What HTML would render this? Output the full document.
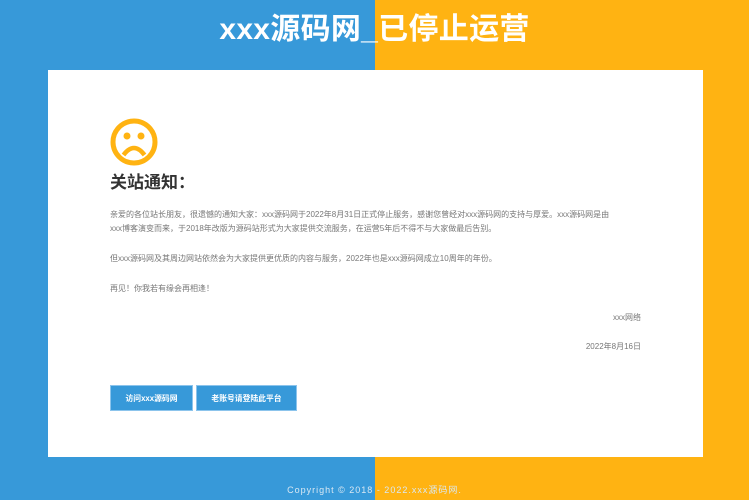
<!DOCTYPE html>
<html><head><meta charset="utf-8"><style>
*{margin:0;padding:0;box-sizing:border-box}
body{width:749px;height:500px;overflow:hidden;position:relative;font-family:"Liberation Sans","Noto Sans CJK SC",sans-serif;background:linear-gradient(90deg,#3799d9 0,#3799d9 375px,#ffb312 375px)}
h1{position:absolute;top:11px;left:0;width:749px;text-align:center;color:#fff;font-size:30px;font-weight:bold;line-height:38px;letter-spacing:0.3px}
.card{position:absolute;left:48px;top:70px;width:655px;height:387px;background:#fff}
.face{position:absolute;left:62px;top:48px}
h2{position:absolute;left:62px;top:101px;font-size:17px;font-weight:bold;color:#333;line-height:24px}
.p{position:absolute;left:62px;font-size:8px;color:#777;line-height:14px;white-space:nowrap}
.r{position:absolute;right:62px;font-size:8px;color:#777;line-height:14px}
.btn{position:absolute;top:315px;height:26px;background:#3799d9;color:#fff;font-size:7.8px;font-weight:bold;text-align:center;line-height:26px;border:1px solid #8cc4ec}
.foot{position:absolute;top:483px;width:749px;text-align:center;color:#d9e8f3;font-size:9px;letter-spacing:1px}
</style></head><body>
<h1>xxx源码网_已停止运营</h1>
<div class="card">
<svg class="face" width="48" height="48" viewBox="0 0 48 48"><circle cx="24" cy="24" r="21" fill="none" stroke="#ffb312" stroke-width="5"/><circle cx="17" cy="18" r="3.5" fill="#ffb312"/><circle cx="31" cy="18" r="3.5" fill="#ffb312"/><path d="M13.5 37 Q24 23 34.5 37" fill="none" stroke="#ffb312" stroke-width="4.5"/></svg>
<h2>关站通知：</h2>
<div class="p" style="top:138px">亲爱的各位站长朋友，很遗憾的通知大家：xxx源码网于2022年8月31日正式停止服务，感谢您曾经对xxx源码网的支持与厚爱。xxx源码网是由</div>
<div class="p" style="top:152px">xxx博客演变而来，于2018年改版为源码站形式为大家提供交流服务，在运营5年后不得不与大家做最后告别。</div>
<div class="p" style="top:182px">但xxx源码网及其周边网站依然会为大家提供更优质的内容与服务，2022年也是xxx源码网成立10周年的年份。</div>
<div class="p" style="top:212px">再见！你我若有缘会再相逢！</div>
<div class="r" style="top:241px">xxx网络</div>
<div class="r" style="top:270px">2022年8月16日</div>
<div class="btn" style="left:62px;width:83px">访问xxx源码网</div>
<div class="btn" style="left:148px;width:101px">老账号请登陆此平台</div>
</div>
<div class="foot">Copyright © 2018 - 2022.xxx源码网.</div>
</body></html>
